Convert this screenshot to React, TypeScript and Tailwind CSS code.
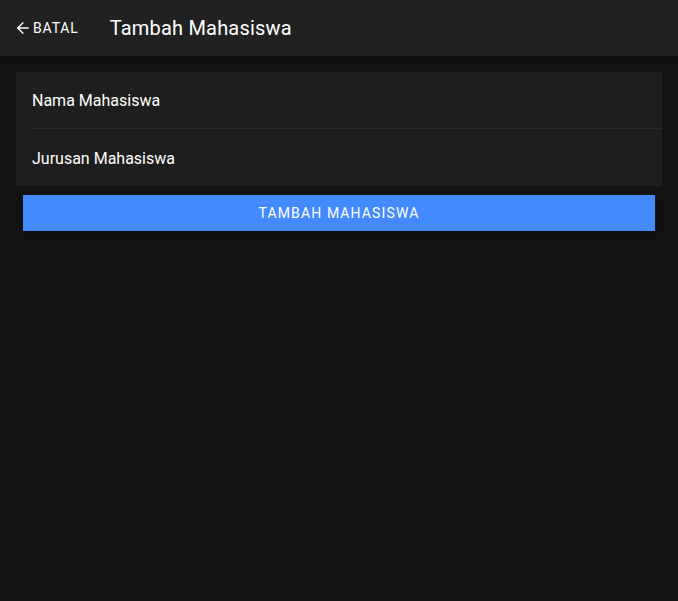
import { ArrowLeft } from "lucide-react";

const fields = ["Nama Mahasiswa", "Jurusan Mahasiswa"];

export default function App() {
  return (
    <div className="min-h-[601px] bg-[#121212] text-white" style={{ fontFamily: "Roboto, 'Liberation Sans', sans-serif" }}>
      <header className="h-14 bg-[#212121] flex items-center shadow-md">
        <button className="flex items-center ml-[14px] text-sm font-normal tracking-[0.06em] text-white">
          <ArrowLeft size={18} strokeWidth={1.75} className="mr-[1px]" />
          BATAL
        </button>
        <h1 className="ml-[31px] text-xl font-normal tracking-[0.01em]">Tambah Mahasiswa</h1>
      </header>

      <div className="px-4 pt-4">
        <div className="bg-[#1e1e1e]">
          {fields.map((f, i) => (
            <div key={f} className="pl-4">
              <div className={`h-[57px] flex items-center text-base pt-[2px] ${i === 0 ? "border-b border-[#2a2a2a]" : ""}`}>
                <input
                  placeholder={f}
                  className="w-full bg-transparent outline-none text-white placeholder:text-white"
                />
              </div>
            </div>
          ))}
        </div>
      </div>

      <div className="px-[23px] pt-[9px]">
        <button className="w-full h-9 bg-[#448aff] text-sm font-normal tracking-[0.08em] uppercase text-white shadow">
          Tambah Mahasiswa
        </button>
      </div>
    </div>
  );
}
